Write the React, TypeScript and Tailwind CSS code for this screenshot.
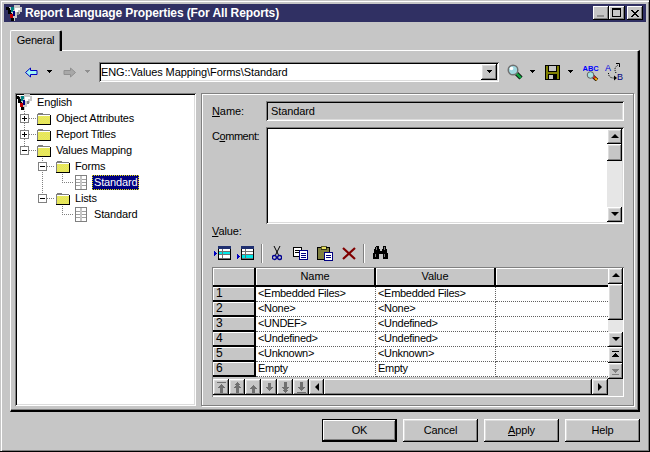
import React from "react";

const sunken = "shadow-[inset_1px_1px_0_#808080,inset_-1px_-1px_0_#fff,inset_2px_2px_0_#000,inset_-2px_-2px_0_#dcdcdc]";
const raised = "shadow-[inset_-1px_-1px_0_#000,inset_1px_1px_0_#fff,inset_-2px_-2px_0_#808080]";
const raisedSoft = "shadow-[inset_-1px_-1px_0_#000,inset_1px_1px_0_#fff,inset_-2px_-2px_0_#808080,inset_2px_2px_0_#dcdcdc]";

function Caret({ color = "#000", x = 0 }: { color?: string; x?: number }) {
  return (
    <svg width="7" height="4" viewBox="0 0 7 4" shapeRendering="crispEdges" className="shrink-0" style={{ marginLeft: x }}>
      <path d="M1 0h5v1H1zM2 1h3v1H2zM3 2h1v1H3z" fill={color} />
    </svg>
  );
}

function Arrow({ dir, disabled }: { dir: "left" | "right"; disabled?: boolean }) {
  const d = dir === "left"
    ? "M0.5 5.5 L5.5 1 V3.5 H12 V7.5 H5.5 V10 Z"
    : "M12.5 5.5 L7.5 1 V3.5 H1 V7.5 H7.5 V10 Z";
  return (
    <svg width="13" height="11" viewBox="0 0 13 11" className="shrink-0">
      <path d={d} fill={disabled ? "#a8a8a8" : "#a0f4f4"} stroke={disabled ? "#909090" : "#0000c0"} strokeWidth="1" />
    </svg>
  );
}

function Magnifier() {
  return (
    <svg width="16" height="16" viewBox="0 0 16 16" className="shrink-0">
      <path d="M9.5 9.5 L14 14" stroke="#000" strokeWidth="4.4" />
      <path d="M9.5 9.5 L14 14" stroke="#10a040" strokeWidth="2.6" />
      <circle cx="6" cy="6" r="4.8" fill="#a0d8e0" stroke="#707070" strokeWidth="1.4" />
      <circle cx="4.5" cy="4.5" r="1.8" fill="#fff" />
    </svg>
  );
}

function Save() {
  return (
    <svg width="15" height="15" viewBox="0 0 15 15" shapeRendering="crispEdges" className="shrink-0">
      <rect x="0" y="0" width="15" height="15" fill="#000" />
      <rect x="1" y="1" width="13" height="13" fill="#808000" />
      <rect x="3" y="0" width="9" height="7" fill="#000" />
      <rect x="4" y="1" width="7" height="5" fill="#c6c6c6" />
      <rect x="3" y="9" width="9" height="6" fill="#000" />
      <rect x="4" y="10" width="4" height="4" fill="#c6c6c6" />
    </svg>
  );
}

function SpellCheck() {
  return (
    <svg width="17" height="17" viewBox="0 0 17 17" className="shrink-0">
      <text x="-0.5" y="6.5" fontFamily="Liberation Sans" fontWeight="700" fontSize="7.5" fill="#0000ff">ABC</text>
      <path d="M9.5 12 L14 16" stroke="#000" strokeWidth="3.6" />
      <path d="M9.5 12 L12 14" stroke="#e02020" strokeWidth="2.4" />
      <path d="M12 14 L14 16" stroke="#f0a000" strokeWidth="2.4" />
      <circle cx="7.5" cy="11" r="3.3" fill="#a8e0e0" stroke="#606060" />
    </svg>
  );
}

function Replace() {
  return (
    <svg width="19" height="18" viewBox="0 0 19 18" className="shrink-0">
      <text x="0" y="8" fontFamily="Liberation Sans" fontSize="9" fill="#0000e0">A</text>
      <text x="12" y="17" fontFamily="Liberation Sans" fontSize="9" fill="#000080">B</text>
      <path d="M3.5 10 C3.5 14 6 15 9 15" fill="none" stroke="#000" strokeDasharray="1 1" />
      <path d="M9 12.5 V17.5 L12 15 Z" fill="#000" />
      <path d="M11 10 C9 6 10 4 13 2" fill="none" stroke="#000" strokeDasharray="1 1" />
      <path d="M11 0.5 H14.5 V4" fill="none" stroke="#000" />
    </svg>
  );
}

function AddRow({ low }: { low?: boolean }) {
  return (
    <svg width="17" height="14" viewBox="0 0 17 14" shapeRendering="crispEdges" className="shrink-0">
      <path d={low ? "M0 8h1v5H0zM1 9h1v3H1zM2 10h1v1H2z" : "M0 5h1v5H0zM1 6h1v3H1zM2 7h1v1H2z"} fill="#0000c0" />
      <rect x="4" y="0" width="13" height="14" fill="#000" />
      <rect x="4" y="0" width="13" height="3" fill="#203070" />
      <rect x="5" y="3" width="11" height="10" fill="#fff" />
      <rect x="5" y={low ? 9 : 6} width="11" height="3" fill="#00e8e8" />
      <rect x="5" y="5" width="11" height="1" fill="#707070" />
      <rect x="5" y="8" width="11" height="1" fill="#707070" />
      <rect x="5" y="12" width="11" height="1" fill="#707070" />
      <rect x="8" y="3" width="1" height="10" fill="#707070" />
    </svg>
  );
}

function Scissors() {
  return (
    <svg width="10" height="15" viewBox="0 0 10 15" className="shrink-0">
      <path d="M2 0 L6.5 9 M8 0 L3.5 9" stroke="#000" fill="none" />
      <circle cx="2.4" cy="11.5" r="2" fill="none" stroke="#000090" strokeWidth="1.3" />
      <circle cx="7.6" cy="11.5" r="2" fill="none" stroke="#000090" strokeWidth="1.3" />
    </svg>
  );
}

function Copy() {
  return (
    <svg width="15" height="13" viewBox="0 0 15 13" shapeRendering="crispEdges" className="shrink-0">
      <rect x="0.5" y="0.5" width="8" height="9" fill="#fff" stroke="#000" />
      <path d="M2 3h5v1H2zM2 5h5v1H2z" fill="#000" />
      <rect x="6.5" y="3.5" width="8" height="9" fill="#fff" stroke="#000080" />
      <path d="M8 6h5v1H8zM8 8h5v1H8zM8 10h5v1H8z" fill="#000080" />
    </svg>
  );
}

function Paste() {
  return (
    <svg width="16" height="15" viewBox="0 0 16 15" shapeRendering="crispEdges" className="shrink-0">
      <rect x="0.5" y="1.5" width="12" height="12" fill="#808040" stroke="#000" />
      <rect x="4" y="0" width="5" height="3" fill="#e8e060" stroke="#000" strokeWidth="0.6" />
      <rect x="7.5" y="6.5" width="8" height="8" fill="#fff" stroke="#000080" />
      <path d="M9 9h5v1H9zM9 11h5v1H9z" fill="#000080" />
    </svg>
  );
}

function Delete() {
  return (
    <svg width="14" height="13" viewBox="0 0 14 13" className="shrink-0">
      <path d="M1 1 L13 12 M13 1 L1 12" stroke="#800000" strokeWidth="2.2" />
    </svg>
  );
}

function Binoculars() {
  return (
    <svg width="16" height="14" viewBox="0 0 16 14" shapeRendering="crispEdges" className="shrink-0">
      <path d="M3 0h3v3h1v2h2V3h1V0h3v3h1v4h1v6H10V8H6v5H0V7h1V3h1z" fill="#000" />
      <path d="M3 1h1v3H3zM11 1h1v3h-1zM2 8h1v3H2zM11 8h1v3h-1z" fill="#808080" />
    </svg>
  );
}

const dither: React.ReactNode[] = [];
for (let y = 4; y < 12; y++) {
  for (let x = 1; x < 13; x++) {
    if ((x + y) % 2 === 0) dither.push(<rect key={`${x}-${y}`} x={x} y={y} width="1" height="1" fill="#f0f040" />);
  }
}

function Folder() {
  return (
    <svg width="14" height="13" viewBox="0 0 14 13" shapeRendering="crispEdges" className="shrink-0">
      <path d="M1 1h5v1h7v11H0V2h1z" fill="#808080" />
      <rect x="1" y="4" width="12" height="8" fill="#dede78" />
      {dither}
      <rect x="1" y="3" width="12" height="1" fill="#fff" />
      <rect x="13" y="3" width="1" height="10" fill="#000" />
      <rect x="0" y="12" width="14" height="1" fill="#000" />
    </svg>
  );
}

function ListIcon() {
  return (
    <svg width="12" height="15" viewBox="0 0 12 15" shapeRendering="crispEdges" className="shrink-0">
      <rect x="0.5" y="0.5" width="11" height="14" fill="#fff" stroke="#808080" />
      <rect x="5" y="1" width="2" height="13" fill="#c6c6c6" />
      <path d="M1 4h4v1H1zM1 7h4v1H1zM1 10h4v1H1zM7 4h4v1H7zM7 7h4v1H7zM7 10h4v1H7z" fill="#a0a0a0" />
    </svg>
  );
}

function Globe({ size = 16 }: { size?: number }) {
  return (
    <svg width={size} height={size} viewBox="0 0 16 16" shapeRendering="crispEdges" className="shrink-0">
      <path d="M8 0h6v2h2v5h-2v2h-3v4H9v3H6v-5H4V8H2V2h6z" fill="#c8c8c8" />
      <path d="M0 2h3v1h1v2h1v3h1v5h2v3H5v-3H4V9H2V5H0z" fill="#000" />
      <path d="M5 2h3v3H7v2H5z" fill="#008080" />
      <path d="M4 9h3v4H4z" fill="#c00000" />
      <path d="M9 3h5v2h-2v2H9z" fill="#fff" />
      <path d="M7 6h2v5H7z" fill="#000080" />
      <path d="M11 7h2v3h-2z" fill="#808080" />
    </svg>
  );
}

function Expander({ open }: { open?: boolean }) {
  return (
    <div className="relative w-[9px] h-[9px] border border-[#808080] bg-white shrink-0">
      <div className="absolute left-[1px] top-[3px] w-[5px] h-[1px] bg-black" />
      {!open && <div className="absolute left-[3px] top-[1px] w-[1px] h-[5px] bg-black" />}
    </div>
  );
}

function TreeRow({ pl, exp, open, icon, label, selected, gap = 5 }: { pl: number; exp?: boolean; open?: boolean; icon: React.ReactNode; label: string; selected?: boolean; gap?: number }) {
  return (
    <div className="h-4 flex items-center relative tracking-[-0.15px]" style={{ paddingLeft: pl }}>
      {exp && <div className="absolute" style={{ left: pl < 30 ? 4 : 22 }}><Expander open={open} /></div>}
      {icon}
      {selected ? (
        <span className="ml-[5px] h-[15px] px-[2px] bg-[#000080] text-white leading-[14px] outline-1 outline-dotted outline-[#e8e000] -outline-offset-1">{label}</span>
      ) : (
        <span style={{ marginLeft: gap }}>{label}</span>
      )}
    </div>
  );
}

function ScrollBtn({ children, h = "h-[15px]" }: { children?: React.ReactNode; h?: string }) {
  return (
    <div className={`w-[15px] ${h} bg-[#c6c6c6] ${raisedSoft} flex items-center justify-center shrink-0`}>{children}</div>
  );
}

function Tri({ dir, color = "#000" }: { dir: "up" | "down" | "left" | "right"; color?: string }) {
  const d = { up: "M4 1 L8 5 H0 Z", down: "M0 1 H8 L4 5 Z", left: "M6 0 V8 L2 4 Z", right: "M2 0 V8 L6 4 Z" }[dir];
  return (
    <svg width="8" height="8" viewBox="0 0 8 8" className="shrink-0"><path d={d} fill={color} /></svg>
  );
}

function TriBar({ up, color = "#000" }: { up?: boolean; color?: string }) {
  return (
    <svg width="9" height="9" viewBox="0 0 9 9" shapeRendering="crispEdges" className="shrink-0">
      <path d={up ? "M1 0h7v1H1zM4 2h1v1H4zM3 3h3v1H3zM2 4h5v1H2zM1 5h7v1H1z" : "M1 2h7v1H1zM2 3h5v1H2zM3 4h3v1H3zM4 5h1v1H4zM1 7h7v1H1z"} fill={color} />
    </svg>
  );
}

function MoveBtn({ kind }: { kind: number }) {
  const paths = [
    "M1 0h9v1H1zM5 2h1v1H5zM4 3h3v1H4zM3 4h5v1H3zM2 5h7v1H2zM4 6h3v5H4z",
    "M5 0h1v1H5zM4 1h3v1H4zM3 2h5v1H3zM4 3h3v1H4zM3 4h5v1H3zM2 5h7v1H2zM4 6h3v5H4z",
    "M5 3h1v1H5zM4 4h3v1H4zM3 5h5v1H3zM2 6h7v1H2zM4 7h3v4H4z",
    "M4 1h3v4H4zM2 5h7v1H2zM3 6h5v1H3zM4 7h3v1H4zM5 8h1v1H5z",
    "M4 0h3v5H4zM2 5h7v1H2zM3 6h5v1H3zM4 7h3v1H4zM3 8h5v1H3zM4 9h3v1H4zM5 10h1v1H5z",
    "M4 0h3v5H4zM2 5h7v1H2zM3 6h5v1H3zM4 7h3v1H4zM5 8h1v1H5zM1 10h9v1H1z",
  ][kind];
  return (
    <div className={`w-[16px] h-[16px] bg-[#c6c6c6] ${raisedSoft} flex items-center justify-center shrink-0`}>
      <svg width="11" height="11" viewBox="0 0 11 11" shapeRendering="crispEdges"><path d={paths} fill="#707070" /></svg>
    </div>
  );
}

const rows = [
  ["1", "<Embedded Files>", "<Embedded Files>"],
  ["2", "<None>", "<None>"],
  ["3", "<UNDEF>", "<Undefined>"],
  ["4", "<Undefined>", "<Undefined>"],
  ["5", "<Unknown>", "<Unknown>"],
  ["6", "Empty", "Empty"],
];

function HeaderCell({ w, label }: { w: string; label?: string }) {
  return (
    <div className={`${w} h-[19px] bg-[#c6c6c6] border-r-2 border-b-2 border-black shadow-[inset_1px_1px_0_#fff] flex items-center justify-center shrink-0 tracking-[-0.1px]`}>{label}</div>
  );
}

function Button({ children, def, className = "" }: { children: React.ReactNode; def?: boolean; className?: string }) {
  return (
    <div className={`w-[75px] h-[23px] flex items-center justify-center bg-[#c6c6c6] tracking-[-0.1px] ${def ? "border border-black shadow-[inset_-1px_-1px_0_#000,inset_1px_1px_0_#fff,inset_-2px_-2px_0_#808080]" : raisedSoft} ${className}`}>{children}</div>
  );
}

export default function App() {
  return (
    <div className="w-[650px] h-[452px] bg-[#c6c6c6] p-1 flex flex-col text-[11px] text-black shadow-[inset_-1px_-1px_0_#000,inset_1px_1px_0_#c6c6c6,inset_2px_2px_0_#fff,inset_-2px_-2px_0_#808080] font-['Liberation_Sans',sans-serif] overflow-hidden select-none">
      {/* Title bar */}
      <div className="h-[18px] bg-[#303063] flex items-center shrink-0 relative">
        <div className="ml-[2px]"><Globe size={16} /></div>
        <span className="ml-[3px] text-white font-bold text-[12px] tracking-[-0.11px] leading-none">Report Language Properties (For All Reports)</span>
        <div className="ml-auto mr-[3px] flex items-center">
          <div className={`w-[16px] h-[14px] bg-[#c6c6c6] ${raised} relative`}><div className="absolute left-[4px] bottom-[3px] w-[7px] h-[2px] bg-[#909090]" /></div>
          <div className={`w-[16px] h-[14px] bg-[#c6c6c6] ${raised} relative`}><div className="absolute left-[3px] top-[2px] w-[9px] h-[9px] border border-black border-t-2" /></div>
          <div className={`ml-[2px] w-[16px] h-[14px] bg-[#c6c6c6] ${raised} flex items-center justify-center`}>
            <svg width="8" height="7" viewBox="0 0 8 7" shapeRendering="crispEdges"><path d="M0 0h2v1h1v1h2V1h1V0h2v1H7v1H6v1H5v1h1v1h1v1h1v1H6V6H5V5H3v1H2v1H0V6h1V5h1V4h1V3H2V2H1V1H0z" fill="#000" /></svg>
          </div>
        </div>
      </div>

      {/* Tab + panel */}
      <div className="pl-[6px] pr-[6px] mt-[8px] flex flex-col flex-1 min-h-0">
        <div className="w-[52px] h-[21px] pb-[2px] tracking-[-0.2px] rounded-t-[2px] bg-[#c6c6c6] border-l border-t border-white border-r-2 border-r-black shadow-[inset_-1px_0_0_#808080] flex items-center justify-center -mb-px relative z-10">General</div>
        <div className="h-[362px] shrink-0 border-l border-t border-white border-r-2 border-b-2 border-r-black border-b-black shadow-[inset_-1px_-1px_0_#808080] px-1 flex flex-col">
          {/* Toolbar */}
          <div className="h-[42px] flex items-center shrink-0 pl-[10px]">
            <Arrow dir="left" />
            <Caret x={8} />
            <div className="w-[10px]" />
            <Arrow dir="right" disabled />
            <Caret x={8} color="#909090" />
            <div className={`ml-[8px] w-[400px] h-[20px] bg-white ${sunken} flex items-center pl-[2px] pr-[2px] shrink-0`}>
              <span className="tracking-[-0.1px]">ENG::Values Mapping\Forms\Standard</span>
              <div className={`ml-auto w-[16px] h-[16px] bg-[#c6c6c6] ${raisedSoft} flex items-center justify-center`}><Caret /></div>
            </div>
            <div className="ml-[8px]"><Magnifier /></div>
            <Caret x={6} />
            <div className="ml-[9px]"><Save /></div>
            <Caret x={7} />
            <div className="ml-[9px]"><SpellCheck /></div>
            <div className="ml-[5px]"><Replace /></div>
          </div>

          {/* Split */}
          <div className="flex gap-[5px] h-[313px] shrink-0">
            {/* Tree */}
            <div className={`w-[183px] h-full bg-white ${sunken} pt-[1px] pl-[1px] relative`}>
              <svg className="absolute left-0 top-0" width="100" height="140" viewBox="0 0 100 140" shapeRendering="crispEdges">
                <path d="M9 16V55M14 25h8M14 41h8M14 57h8M27 65V105M32 73h8M32 105h8M47 81V89M47 89h12M47 113V121M47 121h12" stroke="#808080" strokeDasharray="1 1" fill="none" />
              </svg>
              <div className="relative">
                <TreeRow pl={0} icon={<Globe />} label="English" gap={5} />
                <TreeRow pl={21} exp icon={<Folder />} label="Object Attributes" />
                <TreeRow pl={21} exp icon={<Folder />} label="Report Titles" />
                <TreeRow pl={21} exp open icon={<Folder />} label="Values Mapping" />
                <TreeRow pl={40} exp open icon={<Folder />} label="Forms" />
                <TreeRow pl={59} icon={<ListIcon />} label="Standard" selected />
                <TreeRow pl={40} exp open icon={<Folder />} label="Lists" />
                <TreeRow pl={59} icon={<ListIcon />} label="Standard" gap={7} />
              </div>
            </div>

            {/* Right */}
            <div className="w-[433px] h-full border border-[#808080] shadow-[inset_1px_1px_0_#fff,1px_1px_0_#fff] pl-[10px] pr-[9px] flex flex-col tracking-[-0.1px]">
              <div className="flex items-center mt-[7px] h-[20px] shrink-0">
                <span className="w-[54px]"><span className="underline">N</span>ame:</span>
                <div className={`flex-1 h-[20px] ${sunken} flex items-center pl-[5px]`}>Standard</div>
              </div>
              <div className="flex mt-[6px] h-[97px] shrink-0">
                <span className="w-[54px] mt-[1px] tracking-[-0.45px]">C<span className="underline">o</span>mment:</span>
                <div className={`flex-1 bg-white ${sunken} p-[2px] flex justify-end`}>
                  <div className="w-[15px] flex flex-col h-full">
                    <ScrollBtn><Tri dir="up" /></ScrollBtn>
                    <ScrollBtn h="h-[17px]" />
                    <div className="flex-1 bg-[#e6e6e6]" />
                    <ScrollBtn><Tri dir="down" /></ScrollBtn>
                  </div>
                </div>
              </div>
              <div className="h-[14px] leading-[14px] mt-[3px] -translate-y-[3px] shrink-0"><span className="underline">V</span>alue:</div>
              <div className="h-[26px] -mt-[1px] mb-[1px] flex items-center shrink-0 pl-[2px]">
                <AddRow />
                <div className="ml-[6px]"><AddRow low /></div>
                <div className="ml-[7px] w-[2px] h-[19px] bg-[#808080] border-r border-white" />
                <div className="ml-[9px]"><Scissors /></div>
                <div className="ml-[11px]"><Copy /></div>
                <div className="ml-[9px]"><Paste /></div>
                <div className="ml-[9px]"><Delete /></div>
                <div className="ml-[7px] w-[2px] h-[19px] bg-[#808080] border-r border-white" />
                <div className="ml-[8px]"><Binoculars /></div>
              </div>

              {/* Grid */}
              <div className="h-[130px] w-[412px] shrink-0 shadow-[inset_1px_1px_0_#808080,inset_-1px_-1px_0_#fff] p-[1px] flex">
                <div className="w-[395px] flex flex-col shrink-0">
                  <div className="flex shrink-0">
                    <HeaderCell w="w-[43px]" />
                    <HeaderCell w="w-[120px]" label="Name" />
                    <HeaderCell w="w-[120px]" label="Value" />
                    <div className="flex-1 h-[19px] border-b-2 border-black shadow-[inset_1px_1px_0_#fff]" />
                  </div>
                  <div className="flex flex-col tracking-[-0.3px]">
                    {rows.map((r) => (
                      <div key={r[0]} className="flex h-[15px]">
                        <div className="w-[43px] shrink-0 bg-[#c6c6c6] border-r-2 border-b-2 border-black shadow-[inset_1px_1px_0_#fff] pl-[3px] leading-[13px] text-[12px]">{r[0]}</div>
                        <div className="w-[120px] shrink-0 bg-white border-r border-b border-dotted border-[#606060] pl-[2px] leading-[13px] overflow-hidden whitespace-nowrap">{r[1]}</div>
                        <div className="w-[120px] shrink-0 bg-white border-r border-b border-dotted border-[#606060] pl-[2px] leading-[13px] overflow-hidden whitespace-nowrap">{r[2]}</div>
                        <div className="flex-1 bg-white border-b border-dotted border-[#606060]" />
                      </div>
                    ))}
                  </div>
                  <div className="h-[16px] flex shrink-0 mt-[2px]">
                    {[0, 1, 2, 3, 4, 5].map((k) => <MoveBtn key={k} kind={k} />)}
                    <div className={`w-[15px] h-[16px] ${raisedSoft} flex items-center justify-center shrink-0`}><Tri dir="left" /></div>
                    <div className={`flex-1 h-[16px] ${raised}`} />
                    <div className={`w-[16px] h-[16px] ${raisedSoft} flex items-center justify-center shrink-0`}><Tri dir="right" /></div>
                  </div>
                </div>
                <div className="w-[15px] flex flex-col shrink-0">
                  <ScrollBtn h="h-[16px]"><Tri dir="up" /></ScrollBtn>
                  <ScrollBtn h="h-[36px]" />
                  <div className="h-[12px] bg-[#e6e6e6] shrink-0" />
                  <ScrollBtn><Tri dir="down" /></ScrollBtn>
                  <ScrollBtn h="h-[16px]"><TriBar up /></ScrollBtn>
                  <ScrollBtn h="h-[16px]"><TriBar color="#808080" /></ScrollBtn>
                </div>
              </div>
            </div>
          </div>
        </div>
      </div>

      {/* Buttons */}
      <div className="h-[30px] flex items-start justify-end gap-[6px] pr-[6px] pt-[5px] shrink-0 mb-[4px]">
        <Button def>OK</Button>
        <Button>Cancel</Button>
        <Button><span><span className="underline">A</span>pply</span></Button>
        <Button>Help</Button>
      </div>
    </div>
  );
}
